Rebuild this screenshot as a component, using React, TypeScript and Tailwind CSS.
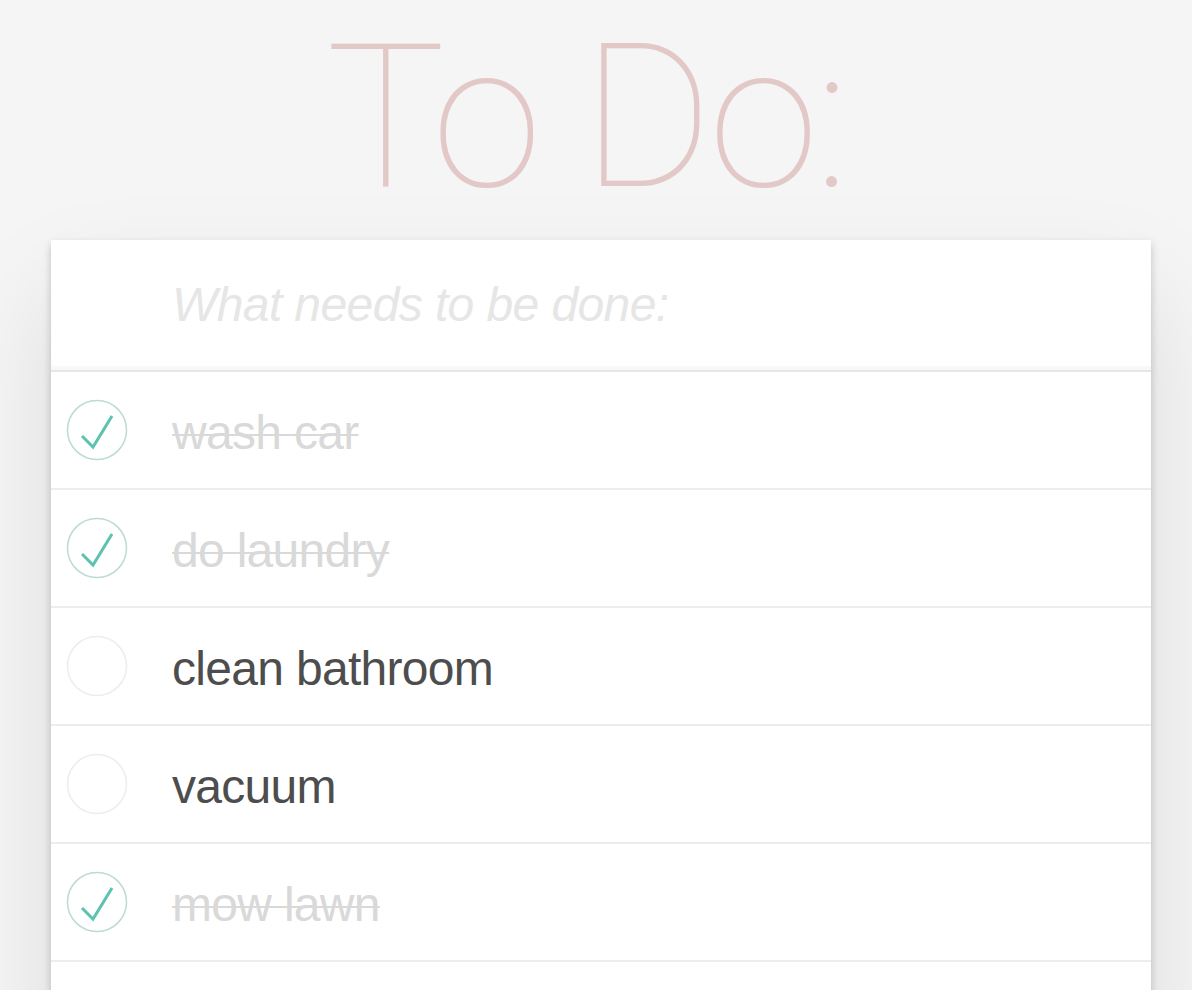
import React from "react";

const items = [
  { text: "wash car", done: true },
  { text: "do laundry", done: true },
  { text: "clean bathroom", done: false },
  { text: "vacuum", done: false },
  { text: "mow lawn", done: true },
  { text: "", done: false },
];

function Toggle({ done }: { done: boolean }) {
  return (
    <svg width="64" height="64" viewBox="0 0 64 64" className="block">
      <circle cx="32" cy="32" r="29.5" fill="none" stroke={done ? "#bddad5" : "#ededed"} strokeWidth="1.5" />
      {done && (
        <polyline points="17,38 28,49 47,18" fill="none" stroke="#5dc2af" strokeWidth="3" strokeLinejoin="miter" />
      )}
    </svg>
  );
}

export default function App() {
  return (
    <div className="min-h-[990px] bg-[#f5f5f5] overflow-hidden" style={{ fontFamily: '"Liberation Sans", Arial, sans-serif' }}>
      <h1
        className="text-center text-[200px] leading-[234px] h-[235px] pt-[1px] pr-[20px] text-[#e3c8c8] tracking-[-4px]"
        style={{ fontFamily: 'Roboto, "Liberation Sans", sans-serif', fontWeight: 100 }}
      >
        To Do:
      </h1>
      <div className="ml-[51px] mt-[5px] w-[1100px] bg-white shadow-[0_4px_8px_0_rgba(0,0,0,0.2),0_50px_100px_0_rgba(0,0,0,0.1)]">
        <div className="h-[130px] flex items-center pl-[121px] shadow-[inset_0_-4px_2px_rgba(0,0,0,0.03)]">
          <input
            className="w-full text-[48px] italic tracking-[-0.6px] outline-none bg-transparent placeholder:text-[#e6e6e6] placeholder:italic"
            placeholder="What needs to be done:"
          />
        </div>
        <div className="border-t-2 border-[#e6e6e6]">
          {items.map((it, i) => (
            <div key={i} className="h-[118px] border-b-2 border-[#ededed] flex items-center">
              <div className="w-[121px] pl-[14px] flex items-center">
                {it.text !== "" && <Toggle done={it.done} />}
              </div>
              <span
                className={
                  "text-[48px] leading-[1.2] pt-[6px] tracking-[-0.7px] " +
                  (it.done ? "text-[#d9d9d9] line-through decoration-2" : "text-[#4d4d4d]")
                }
              >
                {it.text}
              </span>
            </div>
          ))}
        </div>
      </div>
    </div>
  );
}
